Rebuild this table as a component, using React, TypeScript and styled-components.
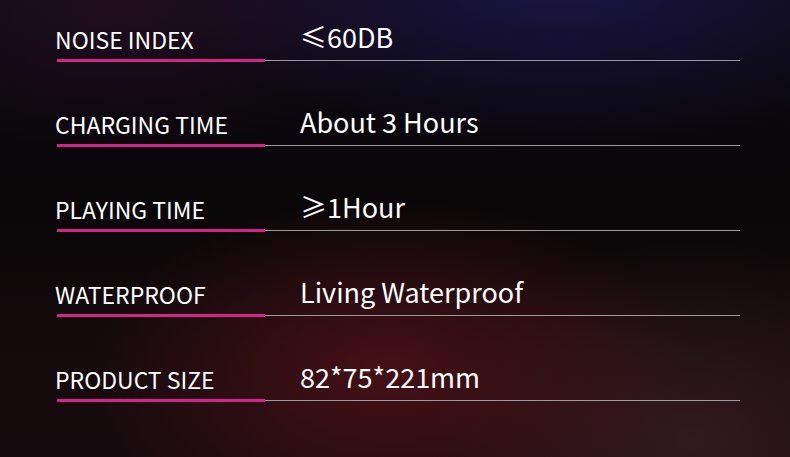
import React from "react";
import styled, { createGlobalStyle } from "styled-components";

const GlobalStyle = createGlobalStyle`
  html, body {
    margin: 0;
    padding: 0;
    background: #0b0709;
  }
`;

const Page = styled.div`
  width: 790px;
  height: 457px;
  overflow: hidden;
  box-sizing: border-box;
  padding: 25px 0 0 57px;
  font-family: "Noto Sans CJK SC", "Noto Sans", sans-serif;
  color: #ffffff;
  background:
    radial-gradient(ellipse 300px 170px at 390px 370px, rgba(110, 22, 30, 0.55), rgba(110, 22, 30, 0) 100%),
    radial-gradient(ellipse 260px 200px at 690px 440px, rgba(90, 50, 55, 0.4), rgba(90, 50, 55, 0) 100%),
    radial-gradient(ellipse 380px 170px at 560px -20px, rgba(40, 30, 110, 0.55), rgba(40, 30, 110, 0) 100%),
    radial-gradient(ellipse 300px 160px at 120px 0px, rgba(70, 20, 60, 0.35), rgba(70, 20, 60, 0) 100%),
    linear-gradient(180deg, #0c0a12 0%, #080607 40%, #140a0c 75%, #180b0f 100%);
`;

const List = styled.div`
  display: flex;
  flex-direction: column;
  gap: 48px;
  width: 683px;
`;

const Row = styled.div`
  display: grid;
  grid-template-columns: 208px 1fr;
  align-items: end;
  height: 37px;
`;

const Label = styled.div`
  height: 100%;
  box-sizing: border-box;
  border-bottom: 3px solid #d3248c;
  font-size: 23px;
  line-height: 28px;
  text-indent: -2px;
  white-space: nowrap;
`;

const Value = styled.div`
  height: 100%;
  box-sizing: border-box;
  border-bottom: 1px solid #9b9b9f;
  margin-bottom: 1px;
  padding-left: 35px;
  font-size: 27px;
  line-height: 26px;
  white-space: nowrap;
`;

const specs = [
  { label: "NOISE INDEX", value: "≤60DB" },
  { label: "CHARGING TIME", value: "About 3 Hours" },
  { label: "PLAYING TIME", value: "≥1Hour" },
  { label: "WATERPROOF", value: "Living Waterproof" },
  { label: "PRODUCT SIZE", value: "82*75*221mm" },
];

export default function App() {
  return (
    <>
      <GlobalStyle />
      <Page>
        <List>
          {specs.map((s) => (
            <Row key={s.label}>
              <Label>{s.label}</Label>
              <Value>{s.value}</Value>
            </Row>
          ))}
        </List>
      </Page>
    </>
  );
}
